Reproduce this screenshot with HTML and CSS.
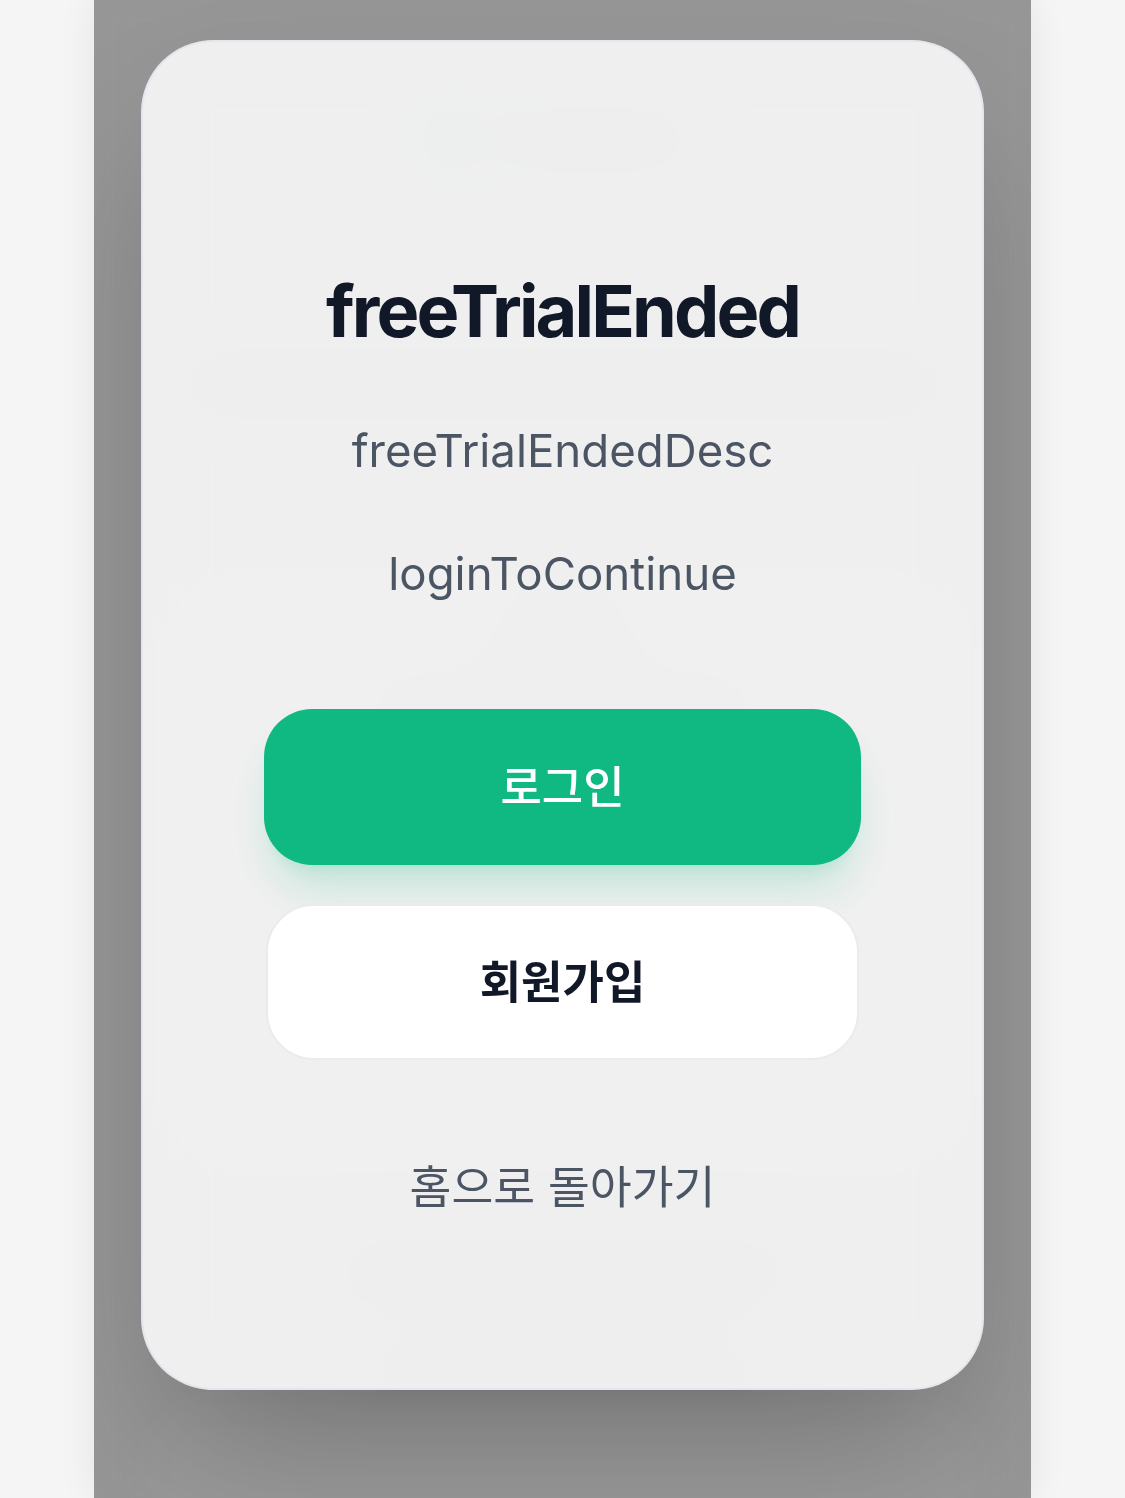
FILE: index.html
```html
<!DOCTYPE html>
<html lang="ko">
<head>
<meta charset="utf-8">
<title>freeTrialEnded</title>
<link rel="stylesheet" href="styles.css">
</head>
<body>
<div class="app">
  <div class="bg-page">
    <div class="bg-logo"><span class="bg-dot"></span><span class="bg-bar bg-bar-logo"></span></div>
    <div class="bg-bar bg-bar-title"></div>
    <div class="bg-card">
      <div class="bg-bar bg-bar-sm"></div>
      <div class="bg-bar bg-bar-md"></div>
    </div>
    <div class="bg-pill bg-pill-a"></div>
    <div class="bg-pill bg-pill-b"></div>
    <div class="bg-card bg-card-low"></div>
  </div>
  <div class="overlay"></div>
  <div class="modal-layer">
    <div class="modal" role="dialog" aria-labelledby="modal-title">
      <h1 id="modal-title" class="modal-title">freeTrialEnded</h1>
      <p class="modal-desc">freeTrialEndedDesc</p>
      <p class="modal-desc modal-desc-second">loginToContinue</p>
      <div class="actions">
        <button class="btn btn-primary" type="button">로그인</button>
        <button class="btn btn-secondary" type="button">회원가입</button>
      </div>
      <a class="home-link" href="#">홈으로 돌아가기</a>
    </div>
  </div>
</div>
</body>
</html>
```
FILE: styles.css
```css
html, body {
  margin: 0;
  padding: 0;
}

body {
  background: #f5f5f5;
  font-family: Inter, "Noto Sans CJK KR", "Noto Sans", sans-serif;
}

.app {
  position: relative;
  width: 937px;
  height: 1498px;
  margin: 0 auto;
  background: #fbfbfb;
  box-shadow: 0 0 36px rgba(0, 0, 0, 0.07);
  overflow: hidden;
}

/* blurred page content behind the dialog */
.bg-page {
  display: flex;
  flex-direction: column;
  align-items: center;
  padding-top: 122px;
}

.bg-logo {
  display: flex;
  align-items: center;
  gap: 24px;
}

.bg-dot {
  width: 34px;
  height: 34px;
  border-radius: 50%;
  background: #10b981;
}

.bg-bar {
  display: block;
  border-radius: 12px;
  background: #c9ccd1;
}

.bg-bar-logo {
  width: 200px;
  height: 28px;
}

.bg-bar-title {
  width: 760px;
  height: 40px;
  margin-top: 208px;
  background: #d6d8dc;
}

.bg-card {
  width: 780px;
  height: 540px;
  margin-top: 198px;
  border-radius: 60px;
  background: #ffffff;
  display: flex;
  flex-direction: column;
  align-items: center;
  gap: 30px;
  padding-top: 36px;
  box-sizing: border-box;
}

.bg-bar-sm {
  width: 120px;
  height: 30px;
  background: #e3e5e8;
}

.bg-bar-md {
  width: 380px;
  height: 26px;
  background: #e6e7ea;
}

.bg-pill {
  border-radius: 30px;
  background: #e2e3e6;
}

.bg-pill-a {
  width: 470px;
  height: 56px;
  margin-top: 102px;
}

.bg-pill-b {
  width: 390px;
  height: 40px;
  margin-top: 44px;
}

.bg-card-low {
  width: 820px;
  height: 180px;
  margin-top: 24px;
}

.overlay {
  position: absolute;
  inset: 0;
  background: rgba(0, 0, 0, 0.4);
  backdrop-filter: blur(16px);
}

.modal-layer {
  position: absolute;
  inset: 0;
  display: flex;
  justify-content: center;
  align-items: flex-start;
  padding-top: 40px;
}

.modal {
  width: 843px;
  height: 1350px;
  box-sizing: border-box;
  border-radius: 72px;
  border: 2px solid rgba(226, 228, 236, 0.9);
  background: rgba(255, 255, 255, 0.85);
  backdrop-filter: blur(30px);
  box-shadow: 0 75px 150px -36px rgba(0, 0, 0, 0.25);
  display: flex;
  flex-direction: column;
  align-items: center;
  padding-top: 221px;
  text-align: center;
}

.modal-title {
  margin: 0;
  font-size: 72px;
  line-height: 96px;
  font-weight: 700;
  letter-spacing: -0.04em;
  color: #111827;
}

.modal-desc {
  margin: 56px 0 0;
  font-size: 45.6px;
  line-height: 72px;
  font-weight: 400;
  color: #4b5563;
}

.modal-desc-second {
  margin-top: 51px;
}

.actions {
  margin-top: 99px;
  display: flex;
  flex-direction: column;
  align-items: center;
  gap: 39px;
}

.btn {
  height: 156px;
  border-radius: 48px;
  font-family: Inter, "Noto Sans CJK KR", sans-serif;
  font-size: 45px;
  line-height: 1;
  cursor: pointer;
  padding: 0;
}

.btn-primary {
  width: 597px;
  border: none;
  background: #10b981;
  color: #ffffff;
  font-weight: 500;
  box-shadow: 0 30px 45px -9px rgba(16, 185, 129, 0.2), 0 12px 18px -12px rgba(16, 185, 129, 0.2);
}

.btn-secondary {
  width: 593px;
  border: 2px solid #ebebeb;
  background: #ffffff;
  color: #111827;
  font-weight: 700;
}

.home-link {
  margin-top: 92px;
  font-size: 45.5px;
  line-height: 72px;
  color: #4b5563;
  text-decoration: none;
}
```
